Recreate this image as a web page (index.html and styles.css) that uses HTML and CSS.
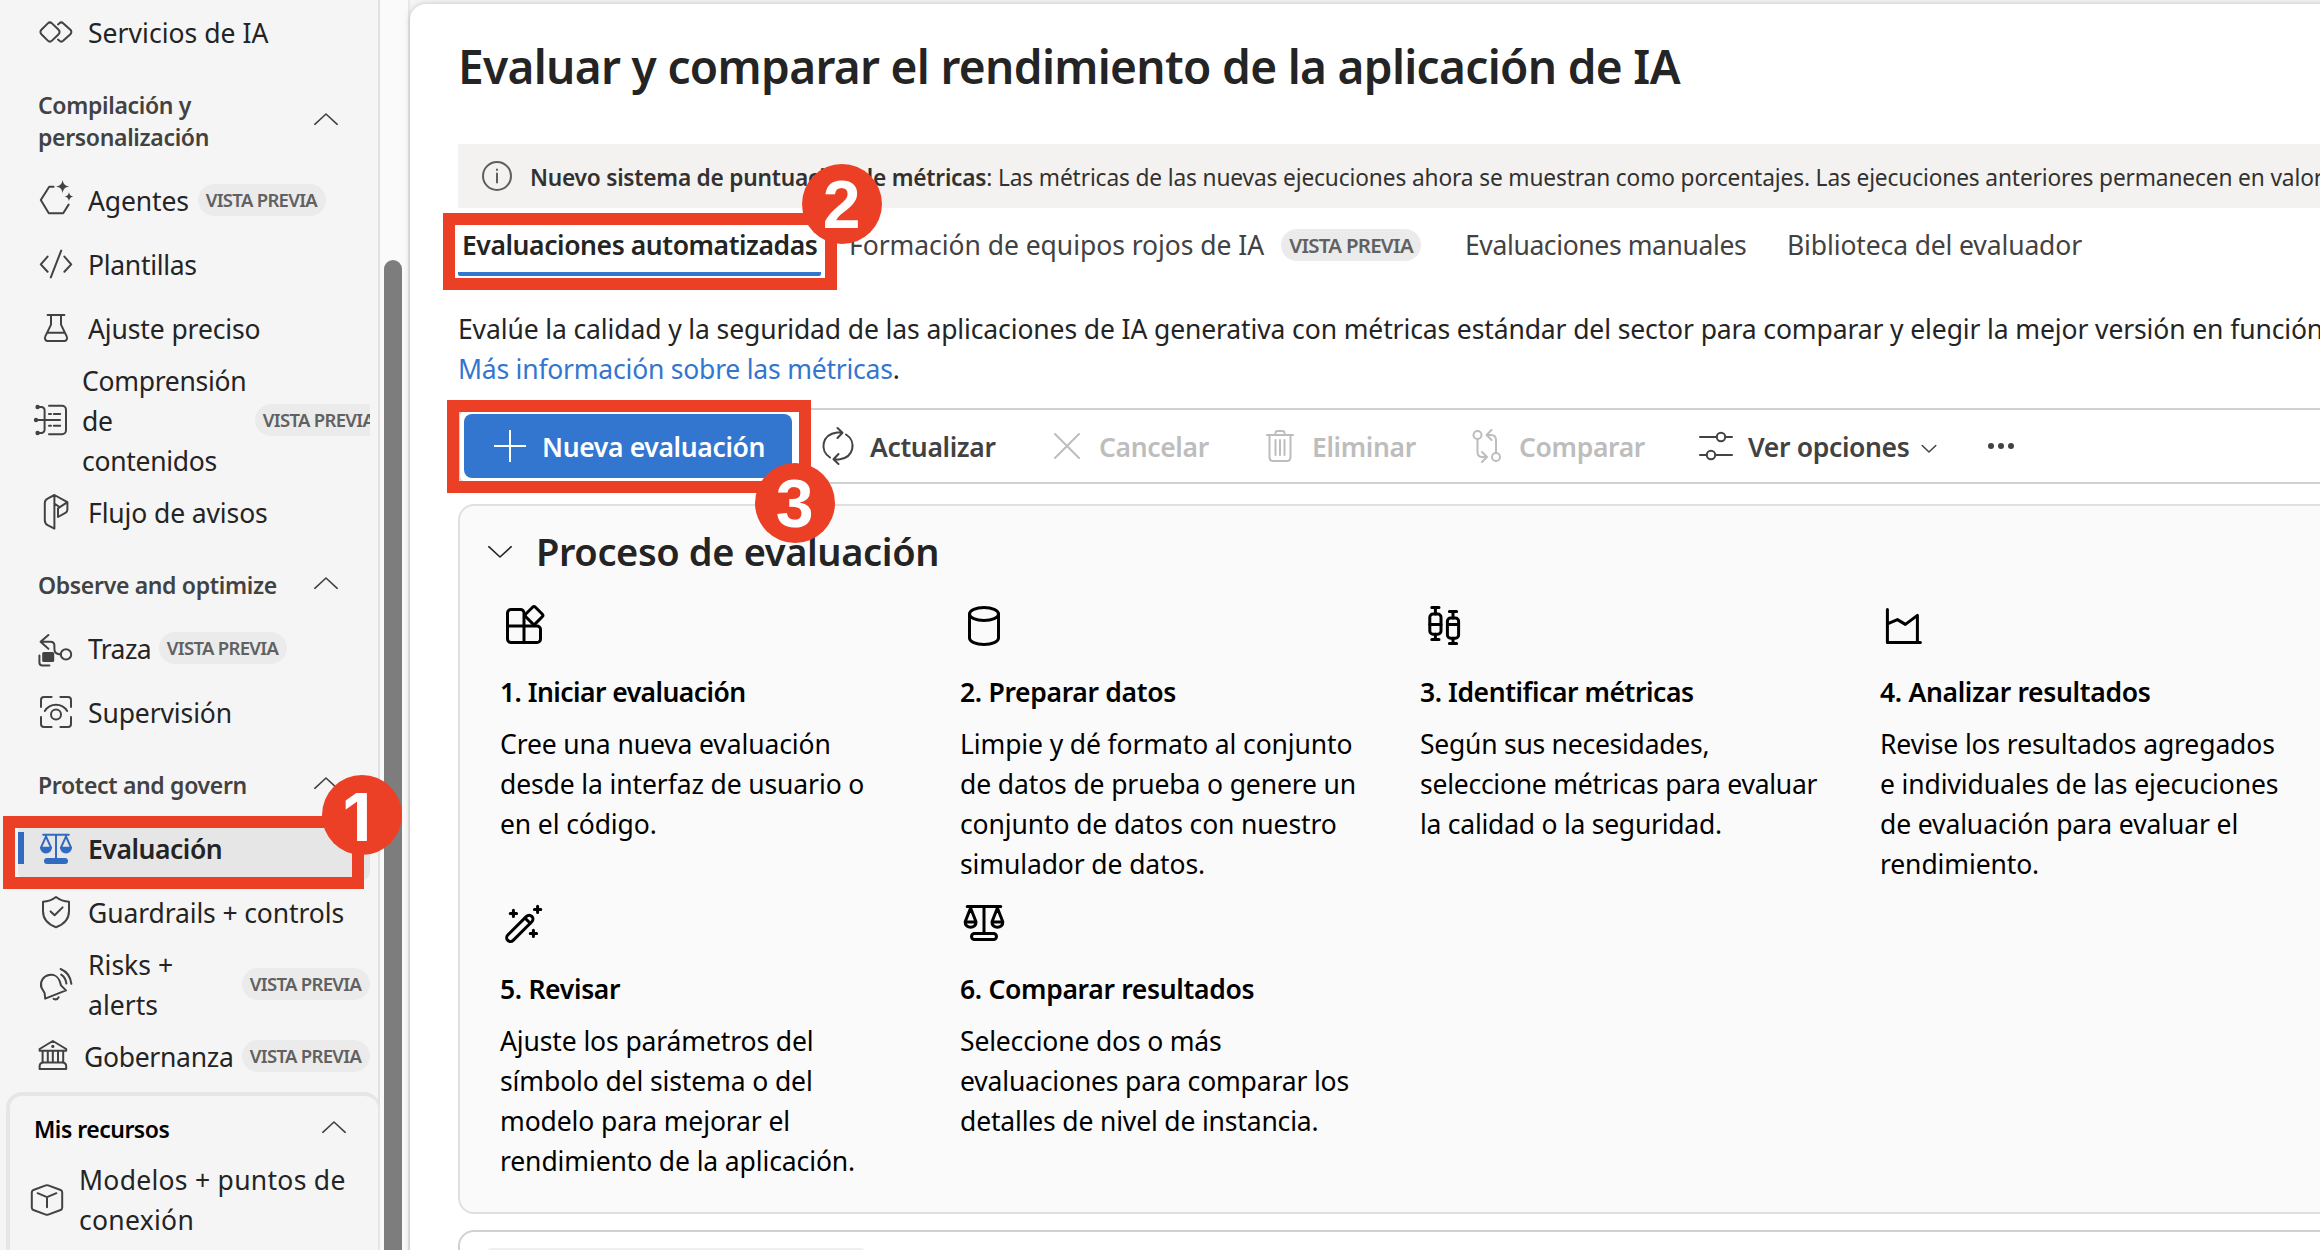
FILE: index.html
```html
<!DOCTYPE html>
<html lang="es">
<head>
<meta charset="utf-8">
<title>Evaluar y comparar el rendimiento de la aplicación de IA</title>
<link rel="stylesheet" href="styles.css">
</head>
<body>
<div class="app">
  <nav class="sidebar">
    <div class="nav-list">
      <a class="nav-item"><svg class="icon" viewBox="0 0 20 20"><path d="M5.9 5.7a1.5 1.5 0 0 1 2.1 0l3.3 3.2a1.5 1.5 0 0 1 0 2.2L8 14.3a1.5 1.5 0 0 1-2.1 0L2.7 11.100a1.500 1.500 0 0 1 0-2.200zM11 6.200l.600-.500a1.500 1.500 0 0 1 2.100 0L17.200 8.900a1.500 1.500 0 0 1 0 2.200l-3.500 3.200a1.500 1.500 0 0 1-2.100 0l-.600-.500"/></svg><span class="label wide">Servicios de IA</span></a>
      <div class="nav-head"><span>Compilación y<br>personalización</span><svg class="chev" viewBox="0 0 24 12"><path d="M.8 11.300 12 1l11.200 10.300"/></svg></div>
      <a class="nav-item"><svg class="icon" viewBox="0 0 20 20"><path d="M8.800 3.400H6.600L2.400 10l4 6.600h7.200l2.700-4.300"/><path class="solid" d="M13.300 0c.5 2.200 1.100 2.800 3.300 3.300-2.200.5-2.800 1.100-3.300 3.300-.5-2.200-1.100-2.800-3.300-3.300 2.200-.5 2.800-1.100 3.300-3.300zM16.500 6.100c.4 1.500.8 1.800 2.200 2.200-1.400.4-1.800.7-2.200 2.200-.4-1.500-.8-1.800-2.200-2.200 1.400-.4 1.800-.7 2.200-2.200z"/></svg><span class="label">Agentes</span><span class="badge">VISTA PREVIA</span></a>
      <a class="nav-item"><svg class="icon" viewBox="0 0 20 20"><path d="M5.800 6.300 2.400 10.200l3.400 3.700M14.200 6.300l3.400 3.900-3.400 3.700M12.600 3.300 7.400 16.700"/></svg><span class="label tight">Plantillas</span></a>
      <a class="nav-item"><svg class="icon" viewBox="0 0 20 20"><path d="M5.800 3.500h8.400M7.500 3.500v4.800l-2.900 6a1.500 1.500 0 0 0 1.400 2.200h8a1.500 1.500 0 0 0 1.400-2.200l-2.900-6V3.500M5.700 12.400h8.600"/></svg><span class="label">Ajuste preciso</span></a>
      <a class="nav-item tall3"><svg class="icon" viewBox="0 0 20 20"><path d="M9 2.900h6.500a2 2 0 0 1 2 2v10.200a2 2 0 0 1-2 2H9M3.300 3.500h1.900a1.600 1.600 0 0 1 1.600 1.600v9.800a1.600 1.600 0 0 1-1.600 1.600H3.300M2.500 10h12M9 7h1M11.400 7h3.200M9 12.900h1M11.400 12.900h3.200"/><circle class="solid" cx="3.300" cy="3.500" r="1.100"/><circle class="solid" cx="2.500" cy="10" r="1.100"/><circle class="solid" cx="3.300" cy="16.500" r="1.100"/></svg><span class="label tight">Comprensión<br>de<br>contenidos</span><span class="badge push">VISTA PREVIA</span></a>
      <a class="nav-item"><svg class="icon" viewBox="0 0 20 20"><path d="M9.200 1.500 6 3.200Q4.400 4 4.400 5.500v8.600q0 1.600 1.400 2.500l3.400 1.700zM9.200 1.500l6.500 3.600v3.700q0 1-.8 1.500L11 12.500V8.200l4.700-3.100M9.200 5.800l2.600 1.700"/></svg><span class="label">Flujo de avisos</span></a>
      <div class="nav-head"><span>Observe and optimize</span><svg class="chev" viewBox="0 0 24 12"><path d="M.8 11.300 12 1l11.200 10.300"/></svg></div>
      <a class="nav-item"><svg class="icon" viewBox="0 0 20 20"><path d="M6.200 3.500 2.300 6.900l3.900 3.500M2.300 6.900h4.900q2 0 2 2v1.600q0 2.700 3.200 2.700M1.700 13.800v3.400q0 1.500 1.500 1.500h3.500"/><circle cx="15" cy="13.200" r="2.600"/><rect class="solid" x="3.100" y="12" width="6" height="5" rx=".8"/></svg><span class="label tighter">Traza</span><span class="badge">VISTA PREVIA</span></a>
      <a class="nav-item"><svg class="icon" viewBox="0 0 20 20"><path d="M7.800 2.500H4A1.500 1.500 0 0 0 2.500 4v3.500M12.200 2.500H16A1.500 1.500 0 0 1 17.500 4v3.500M7.800 17.500H4A1.500 1.500 0 0 1 2.500 16v-3.500M12.200 17.500H16a1.500 1.500 0 0 0 1.500-1.500v-3.500M4.400 9.500c2.600-4.200 8.600-4.200 11.200 0"/><circle cx="10" cy="11.200" r="2.500"/></svg><span class="label">Supervisión</span></a>
      <div class="nav-head"><span>Protect and govern</span><svg class="chev" viewBox="0 0 24 12"><path d="M.8 11.300 12 1l11.200 10.300"/></svg></div>
      <a class="nav-item active"><svg class="icon" viewBox="0 0 20 20"><path d="M3.600 3.400h12.800M10 3.400V15.500M5 4.200 2.500 9.800M5 4.200l2.500 5.600M15 4.200l-2.500 5.600M15 4.200l2.500 5.600"/><path class="solid" d="M2 9.400h6c0 4.400-6 4.400-6 0zM12 9.400h6c0 4.400-6 4.400-6 0z"/><rect class="solid" x="4" y="15" width="12" height="3" rx="1.500"/></svg><span class="label">Evaluación</span></a>
      <a class="nav-item"><svg class="icon" viewBox="0 0 20 20"><path d="M10 2.500C8.200 3.900 6 4.700 3.500 4.900v4.600c0 4 2.500 6.700 6.500 8.100 4-1.400 6.500-4.100 6.500-8.100V4.900C14 4.700 11.800 3.900 10 2.500zM7.300 9.700l2 1.900 4-3.900"/></svg><span class="label">Guardrails + controls</span></a>
      <a class="nav-item tall2"><svg class="icon" viewBox="0 0 20 20"><path d="M4.600 17.300 4.300 14.500 2.700 11.800C1.800 8.800 3.600 6 6.600 5.500c2.300-.4 4.400.8 5.200 2.900l.7 2.300 2.500 2.500zM8.800 17.400c1 .5 2 .2 2.500-.8M12.600 5.300c1.500 1 2.400 2.500 2.600 4.500M12.300 2.500c3.100 1.300 5 3.900 5.400 7.400"/></svg><span class="label wide">Risks +<br>alerts</span><span class="badge push">VISTA PREVIA</span></a>
      <a class="nav-item nudge"><svg class="icon" viewBox="0 0 20 20"><path d="M9.900 2.500 3.300 6.500v.9h13.300v-.9zM4.800 7.400v5.800M7.400 7.400v5.800M9.900 7.400v5.800M12.500 7.400v5.800M15.100 7.400v5.800M3.300 16.500v-1.300q0-2 2-2h9.300q2 0 2 2v1.300z"/><circle class="solid" cx="9.900" cy="5.200" r=".8"/></svg><span class="label tight">Gobernanza</span><span class="badge push">VISTA PREVIA</span></a>
    </div>
    <div class="resources">
      <div class="resources-head"><span>Mis recursos</span><svg class="chev" viewBox="0 0 24 12"><path d="M.8 11.300 12 1l11.200 10.300"/></svg></div>
      <a class="resource"><svg class="icon" viewBox="0 0 20 20"><path d="M9.400 2.700q.6-.2 1.200 0l6.200 2.300q.8.300.8 1.200v7.600q0 .9-.8 1.200l-6.200 2.300q-.6.200-1.200 0L3.200 15q-.8-.3-.8-1.200V6.200q0-.9.800-1.200zM5.300 6.600 10 8.600l4.700-2M10 8.600v5"/></svg><span class="label">Modelos + puntos de<br>conexión</span></a>
    </div>
  </nav>
  <div class="track"><div class="thumb"></div></div>
  <main class="main">
    <h1 class="title">Evaluar y comparar el rendimiento de la aplicación de IA</h1>
    <div class="banner">
      <svg class="info" viewBox="0 0 32 32"><circle cx="16" cy="16" r="14"/><path d="M16 13.500v9M16 9.500v.5"/></svg>
      <p><b>Nuevo sistema de puntuación de métricas</b>: Las métricas de las nuevas ejecuciones ahora se muestran como porcentajes. Las ejecuciones anteriores permanecen en valores</p>
    </div>
    <div class="tabs">
      <a class="tab t1 selected">Evaluaciones automatizadas</a>
      <a class="tab t2"><span>Formación de equipos rojos de IA</span><span class="badge large">VISTA PREVIA</span></a>
      <a class="tab t3">Evaluaciones manuales</a>
      <a class="tab t4">Biblioteca del evaluador</a>
    </div>
    <p class="intro">Evalúe la calidad y la seguridad de las aplicaciones de IA generativa con métricas estándar del sector para comparar y elegir la mejor versión en función<br><a class="link">Más información sobre las métricas</a>.</p>
    <div class="toolbar">
      <button class="btn primary"><svg class="plus" viewBox="0 0 32 32"><path d="M16 0v32M0 16h32"/></svg><span>Nueva evaluación</span></button>
      <button class="btn b-refresh"><svg class="tool" viewBox="0 0 40 40"><path d="M12 31.500C1.500 25 3.500 8.500 19 6.500h5M19.500 2l5 4.700-5 5.300M28 8.500C38.500 15 36.500 31.500 21 33.500h-5M20.500 38l-5-4.700 5-5.300"/></svg><span>Actualizar</span></button>
      <button class="btn off b-cancel"><svg class="tool" viewBox="0 0 40 40"><path d="M8 8l24 24M32 8 8 32"/></svg><span>Cancelar</span></button>
      <button class="btn off b-delete"><svg class="tool" viewBox="0 0 40 40"><path d="M7 9h26M9.500 9v22q0 4 3.500 4h14q3.500 0 3.500-4V9M15.500 9V7q0-2 2-2h5q2 0 2 2v2M15.500 14v15M20 14v15M24.500 14v15"/></svg><span>Eliminar</span></button>
      <button class="btn off b-compare"><svg class="tool" viewBox="0 0 40 40"><circle cx="10.500" cy="9" r="4"/><circle cx="29" cy="31" r="4"/><path d="M10.500 13v13q0 5 5 5h4M15 26l5 5-5 5M29 27V14q0-5-5-5h-4M24.500 4l-5 5 5 5"/></svg><span>Comparar</span></button>
      <button class="btn b-view"><svg class="tool" viewBox="0 0 40 40"><path d="M4 11h16.500M29.500 11H36M4 29h6.500M19.500 29H36"/><circle cx="25" cy="11" r="4.200"/><circle cx="15" cy="29" r="4.200"/></svg><span>Ver opciones</span><svg class="mini" viewBox="0 0 16 10"><path d="M1.200 1.500 8 8l6.800-6.500"/></svg></button>
      <button class="btn b-more"><svg class="dots" viewBox="0 0 28 8"><circle cx="4" cy="4" r="3"/><circle cx="14" cy="4" r="3"/><circle cx="24" cy="4" r="3"/></svg></button>
    </div>
    <section class="process">
      <h2 class="process-title"><svg class="chev dark" viewBox="0 0 24 12"><path d="M.8.700 12 11 23.200.700"/></svg><span>Proceso de evaluación</span></h2>
      <div class="steps">
        <div class="step s1"><svg class="step-icon" viewBox="0 0 24 24"><path d="M12 12V5.500a1.750 1.750 0 0 0-1.750-1.750H5.500A1.750 1.750 0 0 0 3.750 5.500v13a1.750 1.750 0 0 0 1.750 1.750h13a1.750 1.750 0 0 0 1.750-1.750v-4.750A1.750 1.750 0 0 0 18.500 12H3.750M12 12v8.250"/><rect x="13.600" y="3.300" width="6.800" height="6.800" rx="1" transform="rotate(45 17 6.700)"/></svg><h3>1. Iniciar evaluación</h3><p>Cree una nueva evaluación<br>desde la interfaz de usuario o<br>en el código.</p></div>
        <div class="step"><svg class="step-icon" viewBox="0 0 24 24"><ellipse cx="12" cy="6" rx="7.250" ry="3.250"/><path d="M4.750 6v12c0 1.800 3.200 3.250 7.250 3.250s7.250-1.450 7.250-3.250V6"/></svg><h3>2. Preparar datos</h3><p>Limpie y dé formato al conjunto<br>de datos de prueba o genere un<br>conjunto de datos con nuestro<br>simulador de datos.</p></div>
        <div class="step s3"><svg class="step-icon" viewBox="0 0 24 24"><rect x="4.900" y="6" width="5.600" height="10.100" rx="1.600"/><rect x="13.700" y="8" width="5.600" height="10.100" rx="1.600"/><path d="M5.900 2.800h3.600M7.700 2.800V6M7.700 16.100v2.600M5.900 18.700h3.600M4.900 11.300h5.600M14.700 4.800h3.600M16.500 4.800V8M16.500 18.100v2.600M14.700 20.700h3.600M13.700 11.300h5.600"/></svg><h3>3. Identificar métricas</h3><p>Según sus necesidades,<br>seleccione métricas para evaluar<br>la calidad o la seguridad.</p></div>
        <div class="step"><svg class="step-icon" viewBox="0 0 24 24"><path d="M3.700 3.700v16.600h16.500M3.700 10.900l5-2.100 4 2.400 6-4.500v13.600"/></svg><h3>4. Analizar resultados</h3><p>Revise los resultados agregados<br>e individuales de las ejecuciones<br>de evaluación para evaluar el<br>rendimiento.</p></div>
        <div class="step"><svg class="step-icon" viewBox="0 0 24 24"><rect x="-1.900" y="-8.500" width="3.800" height="17" rx="1.900" transform="translate(9.900 14.700) rotate(45)"/><path d="M12.600 9.600l2.500 2.500M6.700 5.600v3.200M5.100 7.200h3.200M18.800 3.600v3.200M17.200 5.200h3.200M16.700 15.600v3.200M15.100 17.200h3.200"/></svg><h3>5. Revisar</h3><p>Ajuste los parámetros del<br>símbolo del sistema o del<br>modelo para mejorar el<br>rendimiento de la aplicación.</p></div>
        <div class="step s6"><svg class="step-icon" viewBox="0 0 24 24"><path d="M3.600 3.800h16.800M12 3.800v13.400M5.300 4.500 2.600 11.400c-.3 3.600 5.700 3.600 5.400 0zM2.600 11.500h5.400M18.700 4.500 16 11.400c-.3 3.600 5.700 3.600 5.400 0zM16 11.500h5.400"/><rect x="5.750" y="17.250" width="12.500" height="3" rx="1.500"/></svg><h3>6. Comparar resultados</h3><p>Seleccione dos o más<br>evaluaciones para comparar los<br>detalles de nivel de instancia.</p></div>
      </div>
    </section>
    <section class="list"><div class="list-field"></div></section>
  </main>
  <div class="frame frame-1"></div><div class="dot dot-1">1</div>
  <div class="frame frame-2"></div><div class="dot dot-2">2</div>
  <div class="frame frame-3"></div><div class="dot dot-3">3</div>
</div>
</body>
</html>
```
FILE: styles.css
```css
* { box-sizing: border-box; }
body { margin: 0; background: #f5f5f5; color: #242424; font-family: "Noto Sans", "Open Sans", sans-serif; font-size: 26.5px; line-height: 40px; letter-spacing: -.12px; }
h1, h2, h3, p { margin: 0; font-weight: 600; }
p { font-weight: 400; }
b { font-weight: 600; letter-spacing: -.23px; }
svg { flex: none; fill: none; stroke: currentColor; stroke-linecap: round; stroke-linejoin: round; }
.solid { fill: currentColor; stroke: none; }

.app { position: relative; display: flex; width: 2320px; height: 1250px; overflow: hidden; white-space: nowrap; }

/* Navigation */
.sidebar { flex: none; width: 380px; border-right: 2px solid #e0e0e0; }
.nav-list { width: 370px; height: 1092px; overflow: hidden; }
.nav-item { display: flex; align-items: center; height: 64px; padding-left: 36px; }
.nav-item .label { margin-left: 12px; padding-top: 2px; }
.label.wide { letter-spacing: .03px; }
.label.tight { letter-spacing: -.3px; }
.label.tighter { letter-spacing: -.6px; }
.label.tighter + .badge { margin-left: 8px; }
.icon { width: 40px; height: 40px; color: #424242; stroke-width: 1; }
.nav-item.tall3 { height: 120px; padding-left: 31px; }
.tall3 .label { margin-left: 11px; }
.tall3 .badge { margin-right: -13px; }
.nav-item.tall2 { height: 80px; }
.nav-item.nudge { padding-left: 33px; }
.nav-item.nudge .label { margin-left: 11px; }
.nav-item.active { margin-left: 18px; padding-left: 18px; border-radius: 8px; background: linear-gradient(#2f6bc0, #2f6bc0) 0 50% / 6px 32px no-repeat #e6e6e6; font-weight: 600; letter-spacing: -.45px; }
.active .icon { color: #2f6bc0; }
.nav-head { display: flex; align-items: center; justify-content: space-between; padding: 25px 32px 15px 38px; font-size: 23px; line-height: 32px; font-weight: 600; letter-spacing: -.33px; color: #424242; }
.nav-head .chev { margin-top: -5px; }
.chev { width: 24px; height: 12px; stroke-width: 1.600; color: #424242; }
.badge { flex: none; display: flex; align-items: center; justify-content: center; width: 128px; height: 32px; margin-left: 9px; padding-right: 1px; border-radius: 16px; background: #ebebeb; color: #616161; font-size: 18.500px; line-height: 32px; font-weight: 600; letter-spacing: -.7px; }
.badge.push { margin-left: auto; }
.badge.large { width: 140px; margin-left: 17px; padding-right: 0; font-size: 20.500px; letter-spacing: -.75px; }

.resources { width: 374px; height: 200px; margin-left: 6px; border: 4px solid #e6e6e6; border-right-width: 2px; border-radius: 16px 16px 0 0; }
.resources-head { display: flex; align-items: center; justify-content: space-between; height: 64px; padding: 2px 32px 0 24px; font-size: 23px; font-weight: 600; letter-spacing: -.5px; color: #000; }
.resources-head .chev { margin-top: -5px; }
.resource { display: flex; align-items: center; margin-top: -1px; padding-left: 17px; }
.resource .label { margin-left: 12px; padding-top: 1px; letter-spacing: .28px; }

/* Scrollbar */
.track { flex: none; width: 30px; padding: 260px 6px 0 4px; background: #fafafa; border-right: 2px solid #e8e8e8; }
.thumb { height: 1000px; border-radius: 10px; background: #7d7d7d; }

/* Main surface */
.main { flex: none; width: 1960px; height: 1300px; margin-top: 4px; padding: 30px 0 0 48px; border-radius: 16px 0 0 0; background: #fff; box-shadow: 0 0 6px rgba(0, 0, 0, .2); }
.title { font-size: 46px; line-height: 64px; letter-spacing: -.67px; }
.banner { display: flex; align-items: center; height: 64px; margin-top: 46px; padding-left: 23px; background: #f3f2f1; font-size: 22.700px; letter-spacing: -.13px; color: #323130; }
.info { width: 32px; height: 32px; margin-right: 17px; stroke-width: 2; color: #605e5c; }
.banner p { padding-top: 4px; }

.tabs { display: flex; height: 68px; padding-top: 17px; color: #424242; }
.tab { display: flex; align-items: center; height: 40px; }
.t1 { width: 363px; height: 51px; padding: 0 0 7px 4px; border-bottom: 4px solid #3276cf; border-radius: 2px; font-weight: 600; letter-spacing: -.42px; color: #242424; }
.t2 { width: 616px; margin-left: 28px; letter-spacing: -.05px; }
.t3 { width: 322px; letter-spacing: -.38px; }
.t4 { letter-spacing: -.13px; }

.intro { margin-top: 33px; }
.link { color: #3276cf; letter-spacing: -.22px; }

.toolbar { display: flex; align-items: center; height: 76px; margin-top: 19px; padding-left: 4px; border: 2px solid #d1d1d1; border-radius: 8px; }
.btn { flex: none; display: flex; align-items: center; height: 64px; padding: 0; border: 0; background: none; font: inherit; font-weight: 600; letter-spacing: -.35px; color: #424242; }
.btn span { padding-top: 1px; }
.primary { width: 328px; padding-left: 30px; border-radius: 8px; background: #3276cf; color: #fff; }
.plus { width: 32px; height: 32px; margin-right: 16px; stroke-width: 2; stroke-linecap: butt; }
.tool { width: 40px; height: 40px; margin-right: 12px; stroke-width: 2; }
.off { color: #bdbdbd; }
.b-refresh { width: 229px; margin-left: 26px; }
.b-cancel { width: 213px; }
.b-delete { width: 207px; }
.b-compare { width: 229px; }
.b-view { width: 291px; }
.mini { width: 16px; height: 10px; margin: 6px 0 0 12px; stroke-width: 1.500; }
.dots { width: 28px; height: 8px; fill: #424242; stroke: none; }

/* Evaluation process */
.process { height: 710px; margin-top: 20px; padding: 26px 0 0 28px; border: 2px solid #e0e0e0; border-radius: 16px; background: #fafafa; }
.process-title { display: flex; align-items: center; height: 40px; font-size: 38px; letter-spacing: -.38px; }
.process-title span { margin: -2px 0 0 24px; }
.dark { color: #242424; }
.steps { display: grid; grid-template-columns: repeat(4, 460px); row-gap: 16px; padding: 30px 0 0 12px; color: #000; }
.step-icon { display: block; width: 48px; height: 48px; stroke-width: 1.500; }
.step h3 { margin: 22px 0 12px; font-size: inherit; letter-spacing: -.32px; }
.step p { margin-bottom: -1px; }
.s1 p { letter-spacing: -.12px; }
.s6 p { letter-spacing: -.17px; }
.s1 h3 { letter-spacing: -.55px; }
.s3 p { letter-spacing: -.25px; }
.s3 h3 { letter-spacing: -.43px; }

.list { height: 120px; margin-top: 16px; padding: 16px 24px; border: 2px solid #d1d1d1; border-radius: 16px; }
.list-field { width: 384px; height: 60px; border-radius: 8px; background: #f0f0f0; }

/* Step markers laid over the page */
.frame { position: absolute; border: 12px solid #eb4026; }
.frame-1 { left: 3px; top: 816px; width: 361px; height: 73px; }
.frame-2 { left: 443px; top: 213px; width: 394px; height: 77px; }
.frame-3 { left: 447px; top: 400px; width: 364px; height: 93px; }
.dot { position: absolute; width: 80px; height: 80px; border-radius: 50%; background: #eb4026; color: #fff; font: 700 68px/80px "Liberation Sans", sans-serif; text-align: center; }
.dot-1 { left: 322px; top: 775px; padding-right: 10px; font: 700 66px/84px Inter, sans-serif; }
.dot-2 { left: 802px; top: 164px; padding-right: 1px; }
.dot-3 { left: 755px; top: 463px; padding-right: 1px; }
```
